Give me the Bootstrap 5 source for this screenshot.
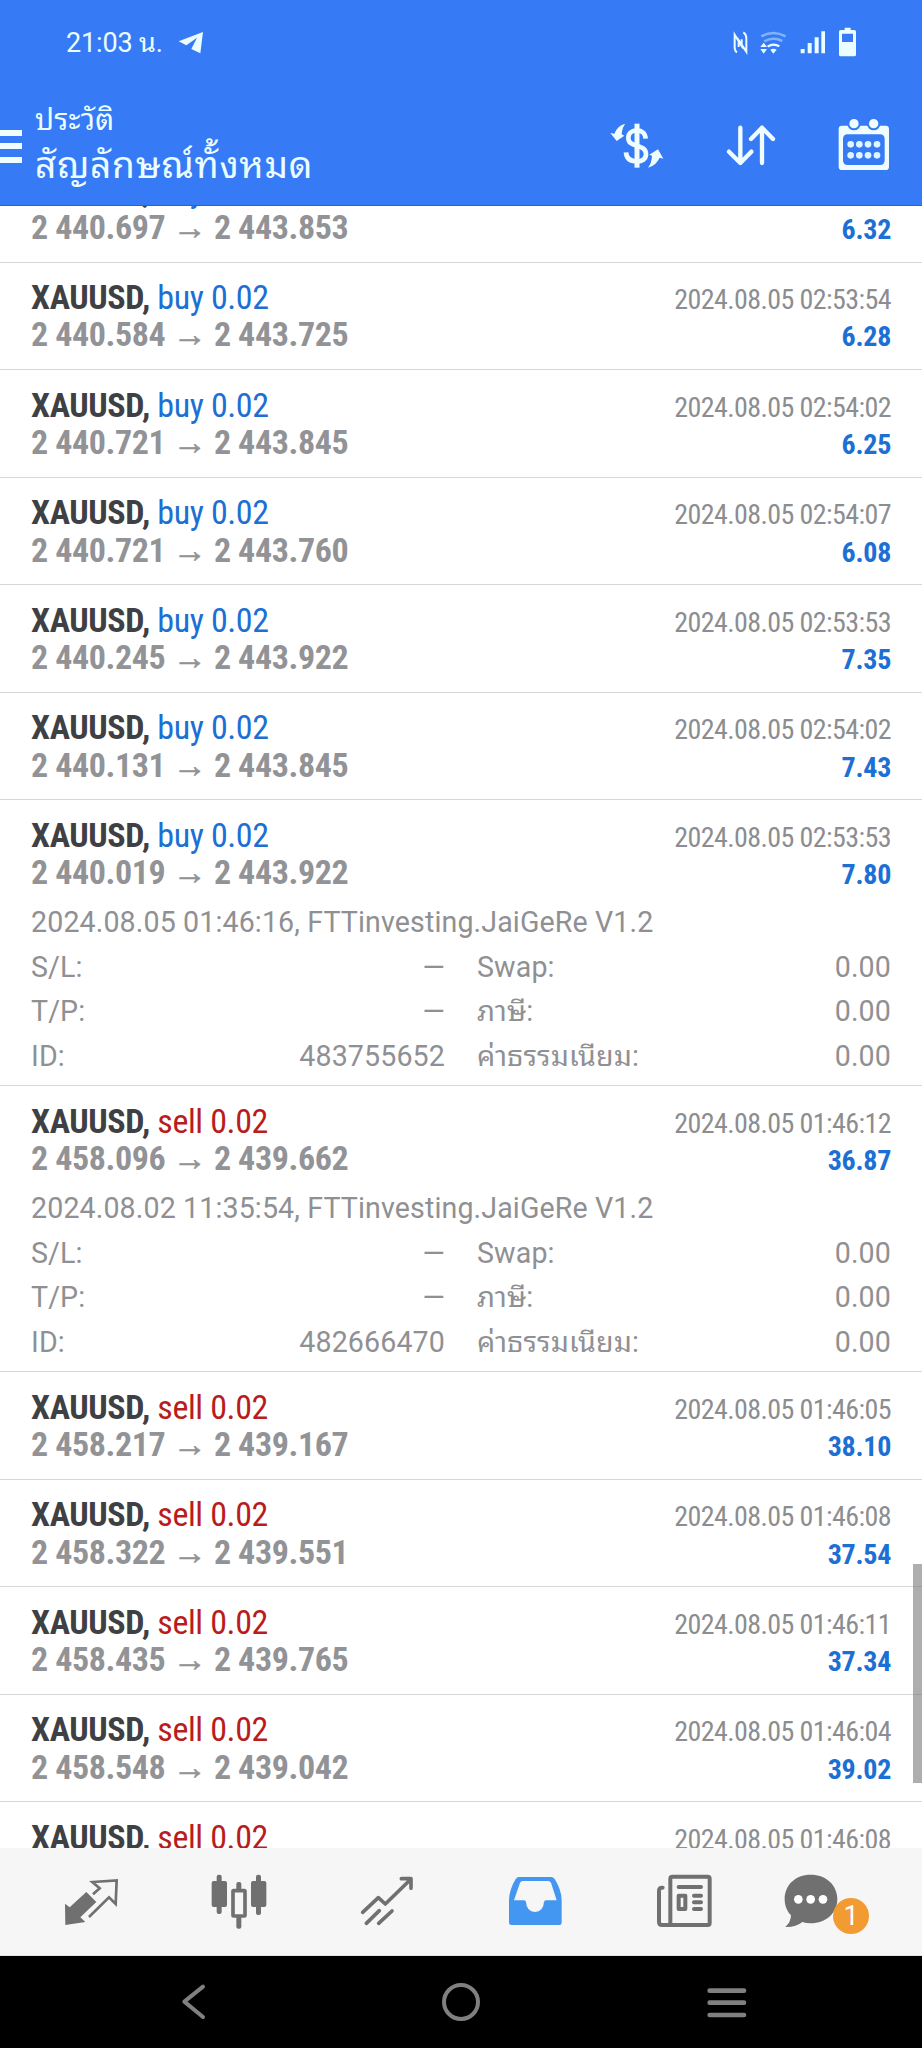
<!DOCTYPE html>
<html lang="th">
<head>
<meta charset="utf-8">
<meta name="viewport" content="width=device-width, initial-scale=1">
<title>ประวัติ</title>
<link href="https://cdn.jsdelivr.net/npm/bootstrap@5.3.0/dist/css/bootstrap.min.css" rel="stylesheet">
<style>
body{width:922px;height:2048px;overflow:hidden;background:#fff;font-family:Roboto,"Noto Sans Thai Looped","Noto Looped Thai",Loma,Waree,Garuda,"Droid Sans Thai","Noto Sans Thai","Noto Sans",sans-serif;color:#8c8d90}
svg{display:block;flex:none}
.app-head{height:206px;background:#367af6;color:#ecfdff;border-bottom:1px solid #2b62cf}
.status{height:84px;padding:2px 64px 0 66px;font-size:27px;line-height:1}
.clock{letter-spacing:-.15px}
.tg{margin-left:15px}
.tools{height:121px}
.burger{width:22px;height:33px;margin-top:3px}
.burger i{display:block;height:6px;background:#effdff}
.heads{padding:4px 0 0 13px}
.sub{font-size:29.5px;line-height:38px;letter-spacing:.3px}
.ttl{font-size:37px;line-height:53px;letter-spacing:.7px}
.tool-set{gap:53.6px;padding-right:27.6px}
.history{height:1642px}
.deals{margin-top:-51px}
.deal{height:107.55px;padding:16.5px 31px 0;border-bottom:1px solid #d6d7d8}
.deal.open{height:286px}
.line{height:37.4px;line-height:37.4px;white-space:nowrap}
.cond{font-family:"Roboto Condensed",Roboto,sans-serif;font-stretch:75%}
.big{font-size:34px;letter-spacing:-.4px}
.mid{font-size:28px;letter-spacing:-.58px}
.sym{color:#3f4044;font-weight:700}
.buy{color:#1c6fd3}
.sell{color:#b91c1c}
.gain{color:#1c6fd3;font-weight:700;letter-spacing:-.3px}
.price{font-weight:700;color:#929396}
.arr{-webkit-text-stroke:.6px #929396}
.info{font-size:28.6px;line-height:44.5px;padding-top:8.8px;letter-spacing:.12px;color:#8f9093}
.info .pair{column-gap:32px}
.thumb{right:0;top:1358px;width:9px;height:219px;background:rgba(120,120,120,.6)}
.tabs{height:108px;background:#f6f6f7;padding:0 17px;border-bottom:1px solid #dfe3e2;color:#707070}
.tabs>a{width:148px;color:inherit}
.count{left:76px;top:26px;width:36px;height:36px;background:#f29b32;color:#fff;font-size:27px;line-height:36px}
.sys{height:92px;background:#000;padding:0 61px;color:#808080}
</style>
</head>
<body class="d-flex flex-column">
<header class="app-head flex-shrink-0">
  <div class="status d-flex align-items-center">
    <span class="clock">21:03 น.</span>
    <svg class="tg" width="26" height="24" viewBox="535 93 78 72"><path fill="#ecfdff" d="M537 124L610 96L602 160L575 147L592 113L560 136Z"/></svg>
    <svg class="ms-auto" width="126" height="34" viewBox="456 76 378 102" fill="none" stroke="#ecfdff">
      <path stroke-width="6" d="M471 155C465 152 464 146 464 140V102L485 136V116M490 95C497 99 499 106 499 113V153L476 119V139"/>
      <path stroke="#7fb4fb" stroke-width="8" d="M544 107Q580 87 617 107M553 122Q580 107 607 121"/>
      <path stroke-width="7" d="M563 138Q580 126 598 137"/>
      <path fill="#ecfdff" stroke="none" d="M541 139L551 126L561 139ZM541 145H561L551 159ZM571 147Q580 141 590 147L580 159Z"/>
      <path fill="#ecfdff" stroke="none" d="M662 145h12v13h-12zM683 127h12v31h-12zM704 110h12v48h-12zM724 92h11v66h-11z"/>
      <path fill="#ecfdff" stroke="none" fill-rule="evenodd" d="M794 81h18v7h11q5 0 5 5v69q0 5-5 5h-41q-5 0-5-5V93q0-5 5-5h12zM786 99v25h33V99z"/>
    </svg>
  </div>
  <div class="tools d-flex align-items-center">
    <div class="burger d-flex flex-column justify-content-between"><i></i><i></i><i></i></div>
    <div class="heads flex-grow-1 text-nowrap">
      <div class="sub">ประวัติ</div>
      <div class="ttl">สัญลักษณ์ทั้งหมด</div>
    </div>
    <div class="tool-set d-flex">
      <svg width="60" height="60" viewBox="80 343 180 180" fill="none" stroke="#effdff" stroke-width="14">
        <path stroke-width="15" d="M170 369V501"/><path d="M196 414C195 397 184 389 170 389C154 389 144 399 144 411C144 427 155 431 170 435C186 440 197 445 197 461C197 475 186 482 170 482C151 482 138 474 137 455"/>
        <path fill="#effdff" stroke="none" d="M90 397L102 399Q112 374 135 369Q125 381 124 401L132 405L109 421ZM203 501Q214 488 215 465L207 462L233 446L249 474L238 471Q227 495 203 501Z"/>
      </svg>
      <svg width="60" height="60" viewBox="422 343 180 180" fill="none" stroke="#effdff" stroke-width="13" stroke-linecap="round" stroke-linejoin="round"><path d="M480 381V487M446 453L480 487L513 453M545 487V381M512 415L545 381L578 415"/></svg>
      <svg width="60" height="60" viewBox="762 343 180 180">
        <path fill="#effdff" fill-rule="evenodd" d="M786 375h131q10 0 10 10v113q0 10-10 10H786q-10 0-10-10V385q0-10 10-10zM803 401q-14 0-14 14v64q0 14 14 14h97q14 0 14-14v-64q0-14-14-14z"/>
        <g fill="#effdff" stroke="#367af6" stroke-width="6"><circle cx="822" cy="369" r="17"/><circle cx="881" cy="369" r="17"/></g>
        <g fill="#dff6ff"><circle cx="812" cy="431" r="10"/><circle cx="838" cy="431" r="10"/><circle cx="864" cy="431" r="10"/><circle cx="891" cy="431" r="10"/><circle cx="812" cy="464" r="10"/><circle cx="838" cy="464" r="10"/><circle cx="864" cy="464" r="10"/><circle cx="891" cy="464" r="10"/></g>
      </svg>
    </div>
  </div>
</header>
<main class="history position-relative overflow-hidden flex-shrink-0">
  <div class="deals" id="deals"></div>
  <div class="thumb position-absolute"></div>
</main>
<nav class="tabs d-flex align-items-center flex-shrink-0">
  <a class="d-flex justify-content-center"><svg width="60" height="60" viewBox="183 216 180 180"><path fill="currentColor" d="M195 311L209 322L259 276L289 306L241 352L256 366L196 375Z"/><path fill="none" stroke="currentColor" stroke-width="8" d="M279 283L299 265L277 246L350 241L347 312L327 292L267 351"/></svg></a>
  <a class="d-flex justify-content-center"><svg width="60" height="60" viewBox="627 216 180 180" fill="currentColor"><rect x="635" y="243" width="46" height="78" rx="6"/><rect x="650" y="224" width="15" height="118" rx="6"/><rect x="753" y="243" width="46" height="78" rx="6"/><rect x="768" y="224" width="15" height="121" rx="6"/><rect x="709" y="246" width="15" height="140" rx="6"/><rect x="699" y="272" width="36" height="76" rx="2" fill="#f6f6f7" stroke="currentColor" stroke-width="11"/></svg></a>
  <a class="d-flex justify-content-center"><svg width="60" height="60" viewBox="1071 216 180 180" fill="none" stroke="currentColor" stroke-width="11" stroke-linecap="round" stroke-linejoin="round"><path d="M1088 337L1135 293L1156 312L1230 240M1204 236H1233V265M1099 370L1138 332M1136 370L1176 333"/></svg></a>
  <a class="d-flex justify-content-center"><svg width="60" height="60" viewBox="132 216 180 180"><path fill="#4497f0" fill-rule="evenodd" d="M174 231H270Q277 231 281 237Q301 268 302 300V368Q302 375 295 375H151Q144 375 144 368V300Q145 268 164 237Q168 231 174 231ZM185 243Q180 243 177 248L159 301H189Q194 301 195 306Q197 335 222 336Q247 335 249 306Q250 301 255 301H287L270 248Q267 243 262 243Z"/></svg></a>
  <a class="d-flex justify-content-center"><svg width="60" height="60" viewBox="576 216 180 180" fill="none" stroke="currentColor" stroke-width="12" stroke-linecap="round" stroke-linejoin="round"><rect x="628" y="230" width="118" height="145" rx="6"/><path d="M605 263Q594 262 594 273V366Q594 375 603 375H640M653 261H720M699 287H720M699 307H720M699 327H720"/><path d="M653 287H673V327H653Z"/></svg></a>
  <a class="d-flex justify-content-center position-relative"><svg width="100" height="60" viewBox="960 216 300 180"><path fill="currentColor" d="M1049 224C1095 224 1129 255 1129 297C1129 339 1095 370 1049 370Q1035 370 1024 366Q1005 382 973 381Q990 366 990 346C978 333 971 317 971 297C971 255 1003 224 1049 224Z"/><g fill="#fff"><circle cx="1012" cy="298" r="13"/><circle cx="1049" cy="298" r="13"/><circle cx="1086" cy="298" r="13"/></g></svg><span class="count position-absolute rounded-circle text-center">1</span></a>
</nav>
<footer class="sys d-flex align-items-center flex-shrink-0">
  <div class="flex-fill d-flex justify-content-center"><svg width="60" height="60" viewBox="493 516 180 180" fill="none" stroke="currentColor" stroke-width="12" stroke-linecap="round" stroke-linejoin="round"><path d="M610 560L554 605L610 651"/></svg></div>
  <div class="flex-fill d-flex justify-content-center"><svg width="60" height="60" viewBox="-90 -90 180 180" fill="none" stroke="currentColor" stroke-width="12"><circle r="51"/></svg></div>
  <div class="flex-fill d-flex justify-content-center"><svg width="60" height="60" viewBox="710 516 180 180" fill="none" stroke="currentColor" stroke-width="14" stroke-linecap="round"><path d="M745 572H848M745 608H848M745 645H848"/></svg></div>
</footer>
<script src="https://cdn.jsdelivr.net/npm/bootstrap@5.3.0/dist/js/bootstrap.bundle.min.js"></script>
<script>
const deals = [
  ['buy','440.697','443.853','05 02:54:02','6.32'],
  ['buy','440.584','443.725','05 02:53:54','6.28'],
  ['buy','440.721','443.845','05 02:54:02','6.25'],
  ['buy','440.721','443.760','05 02:54:07','6.08'],
  ['buy','440.245','443.922','05 02:53:53','7.35'],
  ['buy','440.131','443.845','05 02:54:02','7.43'],
  ['buy','440.019','443.922','05 02:53:53','7.80','2024.08.05 01:46:16','483755652'],
  ['sell','458.096','439.662','05 01:46:12','36.87','2024.08.02 11:35:54','482666470'],
  ['sell','458.217','439.167','05 01:46:05','38.10'],
  ['sell','458.322','439.551','05 01:46:08','37.54'],
  ['sell','458.435','439.765','05 01:46:11','37.34'],
  ['sell','458.548','439.042','05 01:46:04','39.02'],
  ['sell','458.660','439.551','05 01:46:08','38.22']
];
const pair = (a, b, c) => `<div class="pair d-flex"><div class="d-flex justify-content-between flex-fill w-50"><span>${a}</span><span>${b}</span></div><div class="d-flex justify-content-between flex-fill w-50"><span>${c}</span><span>0.00</span></div></div>`;
document.getElementById('deals').innerHTML = deals.map(([side, from, to, time, gain, opened, id]) => `
<article class="deal${id ? ' open' : ''}">
  <div class="line cond d-flex justify-content-between align-items-baseline"><span class="big"><span class="sym">XAUUSD,</span> <span class="${side}">${side} 0.02</span></span><span class="mid">2024.08.${time}</span></div>
  <div class="line cond d-flex justify-content-between align-items-baseline"><span class="big price">2 ${from} <span class="arr">→</span> 2 ${to}</span><span class="mid gain">${gain}</span></div>
  ${id ? `<div class="info"><div>${opened}, FTTinvesting.JaiGeRe V1.2</div>${pair('S/L:', '—', 'Swap:')}${pair('T/P:', '—', 'ภาษี:')}${pair('ID:', id, 'ค่าธรรมเนียม:')}</div>` : ''}
</article>`).join('');
</script>
</body>
</html>
